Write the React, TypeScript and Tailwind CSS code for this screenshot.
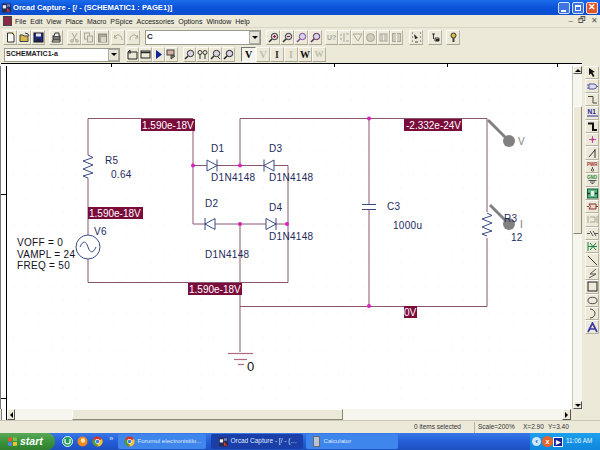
import React from "react";

const Ico = ({ children, w = 11, h = 11 }: { children: React.ReactNode; w?: number; h?: number }) => (
  <svg width={w} height={h} viewBox="0 0 11 11" fill="none" className="block">
    {children}
  </svg>
);

const Btn = ({ children, className = "", w = "w-[14px]", pressed = false }: { children?: React.ReactNode; className?: string; w?: string; pressed?: boolean }) => (
  <div
    className={
      "h-[15px] flex items-center justify-center shrink-0 border " +
      w +
      " " +
      (pressed
        ? "bg-[#f6f4ea] border-t-[#777] border-l-[#777] border-r-white border-b-white "
        : "border-t-[#fbfaf4] border-l-[#fbfaf4] border-r-[#b5b2a2] border-b-[#a8a595] ") +
      className
    }
  >
    {children}
  </div>
);

const G = "#a9a79a";

const Zoom = ({ c = "#333", extra }: { c?: string; extra?: React.ReactNode }) => (
  <Ico>
    <circle cx="6.5" cy="4.5" r="3.2" stroke={c} fill="#d8d4e6" />
    <path d="M4 7 L1 10" stroke={c} strokeWidth="1.6" />
    {extra}
  </Ico>
);

const row1Left = [
  <Ico key="new"><path d="M2.5 1 H7 L9 3 V10 H2.5 Z" fill="#fff" stroke="#333" /><path d="M7 0 L9 2" stroke="#c9a800" /></Ico>,
  <Ico key="open"><path d="M1 3 H4 L5 4 H9 V9.5 H1 Z" fill="#d8b84a" stroke="#444" /><path d="M6 1 L9 2 L10 4" stroke="#333" /></Ico>,
  <Ico key="save"><rect x="1" y="1" width="9" height="9" fill="#1c2a90" stroke="#111" /><rect x="3" y="1.5" width="5" height="3" fill="#e8e8e8" /><rect x="3.5" y="6.5" width="4" height="3" fill="#222" /></Ico>,
];

const grayIcons = [
  <Ico key="cut"><path d="M3 1 L7 8 M8 1 L4 8" stroke={G} /><circle cx="3" cy="9" r="1.3" stroke={G} /><circle cx="8" cy="9" r="1.3" stroke={G} /></Ico>,
  <Ico key="copy"><rect x="1.5" y="1" width="5" height="6" stroke={G} /><rect x="4.5" y="4" width="5" height="6" stroke={G} fill="#e6e3d3" /></Ico>,
  <Ico key="paste"><rect x="1.5" y="2" width="8" height="8" fill={G} stroke="#8b897d" /><rect x="4" y="5" width="5" height="5" fill="#d9d6c8" /></Ico>,
];

const PALETTE = [
  <Ico key="a"><path d="M2 1 L2 8 L4 6.5 L6 10 L7.5 9 L5.5 5.5 L8 5 Z" fill="#111" /></Ico>,
  <Ico key="b"><path d="M2 3 H7 A2.5 2.5 0 0 1 7 8 H2 Z M0 4 H2 M0 7 H2 M9.5 5.5 H11" stroke="#5a5aa0" fill="#dcdcf0" /></Ico>,
  <Ico key="c"><path d="M1 2.5 H6 V9 H10" stroke="#444" /></Ico>,
  <Ico key="d"><text x="0.5" y="7" fontSize="6.5" fontWeight="700" fill="#2a2a9a" fontFamily="Liberation Sans">N1</text><path d="M0 9 H11" stroke="#2a2a9a" /></Ico>,
  <Ico key="e"><path d="M1 2.5 H6 V9 H10" stroke="#111" strokeWidth="2" /></Ico>,
  <Ico key="f"><path d="M5.5 2 V9 M2 5.5 H9" stroke="#c050a0" /><circle cx="5.5" cy="5.5" r="1.3" fill="#c030a0" /></Ico>,
  <Ico key="g"><path d="M2 9 L8 2 M8 1 V10" stroke="#333" /></Ico>,
  <Ico key="h"><text x="0" y="5" fontSize="4.5" fontWeight="700" fill="#a03030" fontFamily="Liberation Sans">PWR</text><path d="M5.5 6 V8" stroke="#555" /><circle cx="5.5" cy="9" r="1.2" stroke="#555" /></Ico>,
  <Ico key="i"><text x="0" y="4.5" fontSize="4.5" fontWeight="700" fill="#2f8a3a" fontFamily="Liberation Sans">GND</text><path d="M1.5 6.5 H9.5 M3 8 H8 M4.5 9.5 H6.5" stroke="#555" /></Ico>,
  <Ico key="j"><rect x="0.5" y="1" width="10" height="9" stroke="#0e5f3a" fill="#5fb488" /><path d="M0.5 5.5 H3 M8 5.5 H10.5" stroke="#0e3f2a" strokeWidth="1.4" /><rect x="4" y="3" width="3" height="5" fill="#e8f4ee" /></Ico>,
  <Ico key="k"><path d="M0 5.5 H2 M9 5.5 H11" stroke="#8a3030" /><path d="M2 3 H9 V8 H2 L3.5 5.5 Z" stroke="#8a3030" fill="#e8d8c8" /></Ico>,
  <Ico key="l"><path d="M1 2 V9 M3 3 H8 V8 H3 M10 2 V9" stroke={G} /></Ico>,
  <Ico key="m"><path d="M0 5.5 H3 M8 5.5 H11 M3 3 L6 8 M6 3 L9 8" stroke="#555" /></Ico>,
  <Ico key="n"><path d="M1 1 V10 M10 5.5 H1 M3 2 L9 9 M9 2 L3 9" stroke="#1e8a4a" /></Ico>,
  <Ico key="o"><path d="M1 1 L10 10" stroke="#333" /></Ico>,
  <Ico key="p"><path d="M9 1 L3 6 L9 6 L2 10" stroke="#555" /></Ico>,
  <Ico key="q"><rect x="1" y="1" width="9" height="9" stroke="#222" /></Ico>,
  <Ico key="r"><ellipse cx="5.5" cy="5.5" rx="4.5" ry="3.2" stroke="#444" /></Ico>,
  <Ico key="s"><path d="M3 1 A5 4.5 0 1 1 3 10" stroke="#444" /></Ico>,
  <Ico key="t"><path d="M1 10 L5.5 1 L10 10 M3 7 H8" stroke="#3a3aa8" strokeWidth="1.7" /></Ico>,
];

const ChromeIcon = () => (
  <svg width="11" height="11" viewBox="0 0 12 12" className="block shrink-0">
    <circle cx="6" cy="6" r="5.5" fill="#d8352a" />
    <path d="M6 6 L1.2 3.2 A5.5 5.5 0 0 0 6 11.5 Z" fill="#4a9d3e" />
    <path d="M6 6 L6 11.5 A5.5 5.5 0 0 0 10.8 3.2 Z" fill="#f4c430" />
    <circle cx="6" cy="6" r="2.6" fill="#fff" />
    <circle cx="6" cy="6" r="2" fill="#3f7fe0" />
  </svg>
);

const OrcadIcon = () => (
  <svg width="9" height="10" viewBox="0 0 11 11" className="block shrink-0">
    <rect width="11" height="11" fill="#2a2a50" />
    <path d="M1 2 H5 V6 H1 Z" fill="#e8e8f0" />
    <path d="M6 5 L10 10 H6 Z" fill="#d03838" />
    <path d="M6 1 H10 V4 H6 Z" fill="#7080d0" />
  </svg>
);

const Wire = ({ d }: { d: string }) => <path d={d} stroke="#8a5570" strokeWidth="1" fill="none" />;

const Volt = ({ x, y, w, h = 12, t, tx = 1 }: { x: number; y: number; w: number; h?: number; t: string; tx?: number }) => (
  <g>
    <rect x={x} y={y} width={w} height={h} fill="#7a0c3c" />
    <text x={x + tx} y={y + h - 2.5} fontSize="10" fill="#fff">{t}</text>
  </g>
);

const L = ({ x, y, t, c = "#1d2a5c" }: { x: number; y: number; t: string; c?: string }) => (
  <text x={x} y={y} fontSize="10" letterSpacing="0.3" fill={c}>{t}</text>
);

const Dot = ({ x, y }: { x: number; y: number }) => <circle cx={x} cy={y} r="2" fill="#d81fc0" />;

const Diode = ({ x, y, dir }: { x: number; y: number; dir: 1 | -1 }) => (
  <g stroke="#3a4a86" fill="#fff">
    <path d={dir === 1 ? `M${x - 5} ${y - 5.5} L${x + 5} ${y} L${x - 5} ${y + 5.5} Z` : `M${x + 5} ${y - 5.5} L${x - 5} ${y} L${x + 5} ${y + 5.5} Z`} />
    <path d={dir === 1 ? `M${x + 5} ${y - 6} V${y + 6}` : `M${x - 5} ${y - 6} V${y + 6}`} />
  </g>
);

const Resistor = ({ x, y }: { x: number; y: number }) => (
  <path
    d={`M${x} ${y} L${x + 5} ${y + 2.5} L${x - 5} ${y + 6} L${x + 5} ${y + 10} L${x - 5} ${y + 14} L${x + 5} ${y + 18} L${x - 5} ${y + 21} L${x} ${y + 23}`}
    stroke="#3a4a86"
    fill="none"
  />
);

const Schematic = () => (
  <svg viewBox="7 66 565 342" width="565" height="342" className="block" fontFamily="Liberation Sans">
    <defs>
      <pattern id="grid" x="7" y="6" width="12.5" height="12.5" patternUnits="userSpaceOnUse">
        <rect x="6" y="6" width="1" height="1" fill="#ebebeb" />
      </pattern>
    </defs>
    <rect x="7" y="66" width="565" height="342" fill="url(#grid)" />
    <Wire d="M88 155 V118.5 H193 V224 H240" />
    <Wire d="M193 165.5 H288 V282.5 H88 V259" />
    <Wire d="M240 165.5 V118.5 H487 V212" />
    <Wire d="M240 224 H288" />
    <Wire d="M240 224 V352" />
    <Wire d="M240 306.5 H487 V238" />
    <Wire d="M88 178 V235" />
    <Wire d="M369 118.5 V204 M369 209 V306.5" />
    <path d="M362 204.5 H376 M362 209.5 H376" stroke="#3a4a86" />
    <Resistor x={88} y={155} />
    <Resistor x={487} y={213} />
    <circle cx="88" cy="247" r="12" stroke="#3a4a86" fill="#fff" />
    <path d="M80 247 C83 240 86 241 88 247 S93 254 96 247" stroke="#3a4a86" fill="none" />
    <Diode x={212} y={165.5} dir={1} />
    <Diode x={269} y={165.5} dir={-1} />
    <Diode x={210} y={224} dir={-1} />
    <Diode x={271} y={224} dir={1} />
    <Dot x={193} y={165.5} />
    <Dot x={240} y={165.5} />
    <Dot x={240} y={224} />
    <Dot x={287} y={224} />
    <Dot x={369} y={118.5} />
    <Dot x={369} y={306} />
    <path d="M228 353.5 H253" stroke="#b06a80" strokeWidth="1.2" />
    <path d="M234 359.5 H247" stroke="#b06a80" strokeWidth="1.2" />
    <path d="M238 364.5 H244" stroke="#b06a80" strokeWidth="1.2" />
    <path d="M488 120 L509 141" stroke="#808080" strokeWidth="3" />
    <circle cx="509" cy="141" r="6" fill="#808080" />
    <path d="M490 205 L509 224" stroke="#808080" strokeWidth="3" />
    <circle cx="509" cy="224" r="6" fill="#808080" />
    <Volt x={141} y={119} w={54} t="1.590e-18V" />
    <Volt x={88} y={207} w={55} t="1.590e-18V" />
    <Volt x={188} y={283} w={54} t="1.590e-18V" />
    <Volt x={404} y={119} w={58} t="-2.332e-24V" tx={2} />
    <Volt x={404} y={306} w={13} t="0V" tx={0} />
    <L x={211} y={152} t="D1" />
    <L x={269} y={152} t="D3" />
    <L x={205} y={207} t="D2" />
    <L x={269} y={211} t="D4" />
    <L x={211} y={181} t="D1N4148" />
    <L x={269} y={181} t="D1N4148" />
    <L x={269} y={240} t="D1N4148" />
    <L x={205} y={258} t="D1N4148" />
    <L x={105} y={164} t="R5" />
    <L x={111} y={178} t="0.64" />
    <L x={94} y={235} t="V6" />
    <L x={17} y={246} t="VOFF = 0" c="#10101c" />
    <L x={17} y={258} t="VAMPL = 24" c="#10101c" />
    <L x={17} y={269} t="FREQ = 50" c="#10101c" />
    <L x={387} y={210} t="C3" />
    <L x={393} y={229} t="1000u" />
    <L x={504} y={222} t="R3" />
    <L x={511} y={241} t="12" />
    <L x={518} y={145} t="V" c="#808080" />
    <L x={520} y={228} t="I" c="#808080" />
    <text x="247" y="371" fontSize="13" fill="#111">0</text>
  </svg>
);

export default function App() {
  return (
    <div className="w-[600px] h-[450px] overflow-hidden flex flex-col bg-[#ece9d8] font-['Liberation_Sans',sans-serif] text-black">
      {/* title bar */}
      <div className="h-[15px] shrink-0 flex items-center pl-[2px] pr-[2px] bg-gradient-to-b from-[#1c6cec] via-[#0a52d8] to-[#0a4fd0]">
        <OrcadIcon />
        <span className="ml-[2px] text-[7.6px] font-bold text-white whitespace-nowrap leading-none">Orcad Capture - [/ - (SCHEMATIC1 : PAGE1)]</span>
        <div className="ml-auto flex gap-[2px]">
          <div className="w-[12px] h-[12px] rounded-[2px] bg-[#3f74e0] border border-[#cfe0fa] flex items-end justify-start pl-[2px] pb-[1px]"><div className="w-[5px] h-[2px] bg-white" /></div>
          <div className="w-[12px] h-[12px] rounded-[2px] bg-[#3f74e0] border border-[#cfe0fa] flex items-center justify-center"><div className="w-[6px] h-[6px] border border-white border-t-2" /></div>
          <div className="w-[12px] h-[12px] rounded-[2px] bg-[#e0552c] border border-[#f6d8c8] flex items-center justify-center text-white text-[9px] font-bold leading-none">✕</div>
        </div>
      </div>
      {/* menu */}
      <div className="h-[13px] shrink-0 flex items-center pl-[3px] text-[7px] text-[#222] leading-none border-b border-[#d8d5c4]">
        <div className="w-[9px] h-[10px] bg-[#8a2a4a] mr-[3px] border border-[#444]" />
        <div className="flex gap-[4px]">
          {["File", "Edit", "View", "Place", "Macro", "PSpice", "Accessories", "Options", "Window", "Help"].map((m) => (
            <span key={m}>{m}</span>
          ))}
        </div>
        <div className="ml-auto flex gap-[5px] pr-[2px] text-[8px] text-[#555]">
          <span>–</span>
          <span>🗗</span>
          <span>✕</span>
        </div>
      </div>
      {/* toolbar 1 */}
      <div className="h-[18px] shrink-0 flex items-center pl-[3px]">
        {row1Left.map((ic, i) => <Btn key={i}>{ic}</Btn>)}
        <Btn className="ml-[4px]"><Ico><rect x="2" y="4" width="7" height="4" fill="#777" stroke="#333" /><path d="M3 4 L4 1 H8 V4" fill="#eee" stroke="#333" /><path d="M2 8 L1 10 H9 L9 8" stroke="#333" /></Ico></Btn>
        <div className="flex ml-[4px]">{grayIcons.map((ic, i) => <Btn key={i}>{ic}</Btn>)}</div>
        <Btn className="ml-[2px]"><Ico><path d="M2 3 L1 6 L4 6 M2 5 C4 1 9 3 9 8" stroke={G} /></Ico></Btn>
        <Btn className="ml-[1px]"><Ico><path d="M9 3 L10 6 L7 6 M9 5 C7 1 2 3 2 8" stroke={G} /></Ico></Btn>
        <div className="ml-[5px] w-[116px] h-[15px] bg-white border border-[#9c9a8c] flex items-center justify-between shrink-0">
          <span className="pl-[1px] text-[8px] font-bold leading-none text-[#222]">C</span>
          <div className="w-[11px] h-[13px] bg-[#e8e5d6] border border-[#aaa] flex items-center justify-center"><div className="border-x-[3px] border-x-transparent border-t-[3px] border-t-black" /></div>
        </div>
        <div className="flex ml-[5px]">
          <Btn><Zoom extra={<path d="M5 4.5 H8 M6.5 3 V6" stroke="#a02020" />} /></Btn>
          <Btn><Zoom extra={<path d="M5 4.5 H8" stroke="#a02020" />} /></Btn>
          <Btn><Zoom c="#7a4a9a" /></Btn>
          <Btn><Zoom c="#5a2a5a" /></Btn>
        </div>
        <div className="flex ml-[3px]">
          <Btn w="w-[13px]"><Ico><text x="1" y="8" fontSize="7" fontWeight="700" fill={G} fontFamily="Liberation Sans">U?</text></Ico></Btn>
          <Btn w="w-[13px]"><Ico><path d="M5 1 V10 M1 3 H3 M1 7 H3 M7 2 H10 M7 9 H10" stroke={G} /></Ico></Btn>
          <Btn w="w-[13px]"><Ico><path d="M1 2 H10 L6 9 Z" stroke={G} /></Ico></Btn>
          <Btn w="w-[13px]"><Ico><circle cx="5.5" cy="5.5" r="4" fill="#cfccbc" stroke={G} /></Ico></Btn>
          <Btn w="w-[13px]"><Ico><rect x="2" y="2" width="7" height="7" stroke={G} /><path d="M4 2 V9 M7 2 V9" stroke={G} /></Ico></Btn>
          <Btn w="w-[13px]"><Ico><rect x="1.5" y="1.5" width="8" height="8" fill="#cfccbc" stroke={G} /><path d="M5.5 1 V10" stroke="#eee" /></Ico></Btn>
        </div>
        <Btn className="ml-[6px]"><Ico><path d="M3 2 L7 6 L4 7 Z" fill="#222" /><path d="M1 1 H2 M1 5 H2 M1 9 H2 M9 1 H10 M9 5 H10 M9 9 H10 M4 10 H7" stroke="#444" /></Ico></Btn>
        <Btn className="ml-[5px]"><Ico><path d="M2 2 H5 M3.5 2 V7 M5 6 H9 V9 H5 Z" stroke="#333" /><rect x="6" y="7" width="3" height="2" fill="#222" /></Ico></Btn>
        <Btn className="ml-[4px]"><Ico><circle cx="5.5" cy="3.5" r="2.5" fill="#d8c040" stroke="#333" /><path d="M5.5 6 V10" stroke="#444" strokeWidth="2" /></Ico></Btn>
      </div>
      {/* toolbar 2 */}
      <div className="h-[17px] shrink-0 flex items-center pl-[4px]">
        <div className="w-[116px] h-[14px] bg-white border border-[#9c9a8c] flex items-center justify-between shrink-0">
          <span className="pl-[1px] text-[7.1px] font-bold leading-none text-[#1a1a1a]">SCHEMATIC1-a</span>
          <div className="w-[11px] h-[12px] bg-[#e8e5d6] border border-[#aaa] flex items-center justify-center"><div className="border-x-[3px] border-x-transparent border-t-[3px] border-t-black" /></div>
        </div>
        <div className="flex ml-[6px]">
          <Btn w="w-[13px]"><Ico><path d="M1 3 H10 V10 H1 Z M3 1 V5 M1 3 L3 1" stroke="#222" /></Ico></Btn>
          <Btn w="w-[13px]"><Ico><rect x="1" y="2" width="9" height="7" stroke="#222" /><path d="M1 3.5 H10" stroke="#222" strokeWidth="1.4" /></Ico></Btn>
          <Btn w="w-[13px]"><Ico><path d="M3 1 L9 5.5 L3 10 Z" fill="#12269c" /></Ico></Btn>
          <Btn w="w-[13px]"><Ico><rect x="1" y="1" width="7" height="5" fill="#d8b0a0" stroke="#444" /><path d="M5 6 V10 L9 7 Z" fill="#777" stroke="#444" /></Ico></Btn>
        </div>
        <div className="flex ml-[5px]">
          <Btn w="w-[13px]"><Zoom /></Btn>
          <Btn w="w-[13px]"><Ico><circle cx="3" cy="3.5" r="2" stroke="#333" /><circle cx="8" cy="3.5" r="2" stroke="#333" /><path d="M3 5.5 V10 M8 5.5 V10" stroke="#333" /></Ico></Btn>
          <Btn w="w-[13px]"><Zoom extra={<path d="M7 7 L10 10" stroke="#333" />} /></Btn>
          <Btn w="w-[13px]"><Zoom c="#222" /></Btn>
        </div>
        <div className="flex ml-[6px] items-center">
          <Btn w="w-[15px]" pressed><span className="font-['Liberation_Serif',serif] text-[10px] font-bold leading-none">V</span></Btn>
          <Btn><span className="font-['Liberation_Serif',serif] text-[10px] font-bold leading-none text-[#c0bead]">V</span></Btn>
          <Btn><span className="font-['Liberation_Serif',serif] text-[10px] font-bold leading-none text-[#333]">I</span></Btn>
          <Btn><span className="font-['Liberation_Serif',serif] text-[10px] font-bold leading-none text-[#c0bead]">I</span></Btn>
          <Btn><span className="font-['Liberation_Serif',serif] text-[10px] font-bold leading-none text-[#111]">W</span></Btn>
          <Btn><span className="font-['Liberation_Serif',serif] text-[9px] font-bold leading-none text-[#c0bead]">W</span></Btn>
        </div>
      </div>
      {/* main */}
      <div className="flex-1 min-h-0 flex">
        <div className="w-[582px] shrink-0 flex flex-col">
          <div className="h-[3px] shrink-0 border-t border-black bg-white ml-[1px] relative">
            <div className="absolute left-[110px] top-0 w-px h-[3px] bg-black" />
            <div className="absolute left-[333px] top-0 w-px h-[3px] bg-black" />
            <div className="absolute left-[446px] top-0 w-px h-[3px] bg-black" />
            <div className="absolute left-[556px] top-0 w-px h-[3px] bg-black" />
          </div>
          <div className="flex-1 min-h-0 flex">
            <div className="w-[7px] shrink-0 bg-white border-l border-l-[#777] border-r border-r-black relative">
              <div className="absolute left-0 top-[128px] w-[5px] h-px bg-black" />
              <div className="absolute left-0 top-[332px] w-[5px] h-px bg-black" />
            </div>
            <div className="w-[565px] bg-white shrink-0 overflow-hidden">
              <Schematic />
            </div>
            <div className="w-[10px] shrink-0 flex flex-col bg-[#f6f5ee] border-l border-[#c9c6b6]">
              <div className="h-[8px] bg-[#ece9d8] border border-t-white border-l-white border-r-[#555] border-b-[#555] flex items-center justify-center"><div className="border-x-[3px] border-x-transparent border-b-[3px] border-b-black" /></div>
              <div className="h-[32px]" />
              <div className="h-[128px] bg-[#ece9d8] border border-t-white border-l-white border-r-[#8a8878] border-b-[#8a8878]" />
              <div className="flex-1" />
              <div className="h-[8px] bg-[#ece9d8] border border-t-white border-l-white border-r-[#555] border-b-[#555] flex items-center justify-center"><div className="border-x-[3px] border-x-transparent border-t-[3px] border-t-black" /></div>
            </div>
          </div>
          <div className="h-[11px] shrink-0 flex items-stretch pl-[1px]">
            <div className="w-[6px] border-r border-black bg-white border-l border-l-[#777]" />
            <div className="w-[8px] bg-[#ece9d8] border border-t-white border-l-white border-r-[#555] border-b-[#555] flex items-center justify-center"><div className="border-y-[3px] border-y-transparent border-r-[3px] border-r-black" /></div>
            <div className="w-[57px] bg-[#f6f5ee]" />
            <div className="w-[271px] bg-[#ece9d8] border border-t-white border-l-white border-r-[#8a8878] border-b-[#8a8878]" />
            <div className="w-[219px] bg-[#f6f5ee]" />
            <div className="w-[9px] bg-[#ece9d8] border border-t-white border-l-white border-r-[#555] border-b-[#555] flex items-center justify-center"><div className="border-y-[3px] border-y-transparent border-l-[3px] border-l-black" /></div>
          </div>
        </div>
        <div className="ml-[3px] pt-[3px] w-[14px] shrink-0 flex flex-col">
          {PALETTE.map((ic, i) => (
            <div key={i} className="h-[13.4px] w-[14px] flex items-center justify-center border border-t-[#fbfaf4] border-l-[#fbfaf4] border-r-[#b5b2a2] border-b-[#b5b2a2]">{ic}</div>
          ))}
        </div>
      </div>
      {/* status bar */}
      <div className="h-[13px] shrink-0 flex items-center text-[6.5px] text-[#333] leading-none border-t border-[#c9c6b6]">
        <span className="ml-[414px] w-[60px] whitespace-nowrap">0 items selected</span>
        <span className="w-px h-[11px] bg-[#b5b2a2]" />
        <span className="ml-[3px] w-[45px] whitespace-nowrap">Scale=200%</span>
        <span className="w-[25px] whitespace-nowrap">X=2.90</span>
        <span className="whitespace-nowrap">Y=3.40</span>
      </div>
      {/* taskbar */}
      <div className="h-[17px] shrink-0 flex items-stretch bg-gradient-to-b from-[#3a78e8] via-[#245ed8] to-[#1e50c0] text-white">
        <div className="w-[55px] rounded-r-[8px] bg-gradient-to-b from-[#58a858] via-[#3b943b] to-[#2f7f2f] flex items-center pl-[7px] gap-[2px]">
          <svg width="11" height="11" viewBox="0 0 11 11" className="block shrink-0">
            <path d="M1 2 L5 1 V5 L1 5.5 Z" fill="#e85a2a" />
            <path d="M6 1 L10 2 V5 L6 5 Z" fill="#7cc04a" />
            <path d="M1 6.5 L5 6 V10 L1 9.5 Z" fill="#4a8ae8" />
            <path d="M6 6 L10 6 V9.5 L6 10 Z" fill="#f4c430" />
          </svg>
          <span className="italic font-bold text-[10.5px] leading-none">start</span>
        </div>
        <div className="flex items-center ml-[7px] gap-[2px]">
          <svg width="11" height="11" viewBox="0 0 11 11" className="block shrink-0"><circle cx="5.5" cy="5.5" r="5" fill="#1e9a5a" stroke="#dff" /><path d="M3 3 V6 C3 8.5 8 8.5 8 6 V3" stroke="#fff" strokeWidth="1.2" fill="none" /></svg>
          <svg width="11" height="11" viewBox="0 0 11 11" className="block shrink-0 ml-[2px]"><circle cx="5.5" cy="5.5" r="5" fill="#f08a1e" /><circle cx="6" cy="4.5" r="2.2" fill="#ffe6b0" /></svg>
          <div className="ml-[2px]"><ChromeIcon /></div>
          <span className="ml-[4px] text-[8px] leading-none -mt-[6px] text-[#cfe0fa]">»</span>
        </div>
        <div className="ml-[5px] w-[88px] my-[1px] rounded-[2px] bg-[#3f86ec] flex items-center pl-[6px] gap-[2px] text-[6.2px] leading-none overflow-hidden whitespace-nowrap text-[#dfe9ff]">
          <ChromeIcon />
          <span>Forumul electronistilo...</span>
        </div>
        <div className="ml-[5px] w-[92px] my-[1px] rounded-[2px] bg-[#1a3fa8] flex items-center pl-[8px] gap-[2px] text-[6.5px] leading-none overflow-hidden whitespace-nowrap text-[#dfe9ff]">
          <OrcadIcon />
          <span>Orcad Capture - [/ - (…</span>
        </div>
        <div className="ml-[3px] w-[92px] my-[1px] rounded-[2px] bg-[#3f86ec] flex items-center pl-[7px] gap-[3px] text-[6.2px] leading-none overflow-hidden whitespace-nowrap text-[#dfe9ff]">
          <div className="w-[7px] h-[11px] bg-[#b8c4d4] border border-[#667] shrink-0" />
          <span>Calculator</span>
        </div>
        <div className="ml-auto w-[70px] bg-gradient-to-b from-[#1ca0ee] to-[#0f86dc] flex items-center pl-[2px] text-[6.3px] leading-none">
          <div className="w-[9px] h-[9px] rounded-full bg-[#cfe6fb] text-[#1a5ac0] flex items-center justify-center text-[8px] font-bold shrink-0">‹</div>
          <div className="ml-[1px] w-[11px] h-[11px] rounded-full bg-[#e8642a] flex items-center justify-center text-[7px] font-bold shrink-0">x</div>
          <div className="w-[10px] h-[10px] bg-[#10209c] border border-white flex items-center justify-center text-[6px] font-bold shrink-0">▶</div>
          <span className="ml-[3px] whitespace-nowrap text-[#e8f4ff]">11:06 AM</span>
        </div>
      </div>
    </div>
  );
}
